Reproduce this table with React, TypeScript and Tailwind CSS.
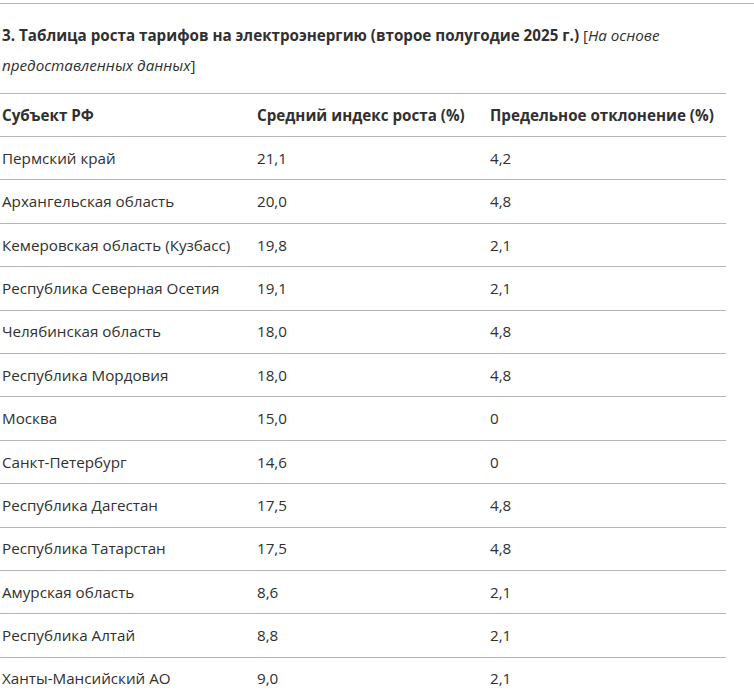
import React from "react";

const rows: [string, string, string][] = [
  ["Пермский край", "21,1", "4,2"],
  ["Архангельская область", "20,0", "4,8"],
  ["Кемеровская область (Кузбасс)", "19,8", "2,1"],
  ["Республика Северная Осетия", "19,1", "2,1"],
  ["Челябинская область", "18,0", "4,8"],
  ["Республика Мордовия", "18,0", "4,8"],
  ["Москва", "15,0", "0"],
  ["Санкт-Петербург", "14,6", "0"],
  ["Республика Дагестан", "17,5", "4,8"],
  ["Республика Татарстан", "17,5", "4,8"],
  ["Амурская область", "8,6", "2,1"],
  ["Республика Алтай", "8,8", "2,1"],
  ["Ханты-Мансийский АО", "9,0", "2,1"],
];

export default function App() {
  return (
    <div
      className="w-[754px] h-[699px] overflow-hidden bg-white text-[#303030]"
      style={{ fontFamily: '"Open Sans", "Noto Sans", sans-serif' }}
    >
      <div className="pt-[3px]">
        <div className="h-px bg-[#b8b8b8]" />
      </div>
      <p className="text-[15.2px] leading-[30px] pt-[16px] pl-[2px] pr-[40px]">
        <span className="font-bold">
          3. Таблица роста тарифов на электроэнергию (второе полугодие 2025 г.)
        </span>{" "}
        [<em>На основе предоставленных данных</em>]
      </p>
      <table className="mt-[13px] w-[726px] border-collapse text-[15.2px] border-t border-[#b5b5b5] table-fixed">
        <colgroup>
          <col className="w-[255px]" />
          <col className="w-[233px]" />
          <col />
        </colgroup>
        <thead>
          <tr className="h-[43px] border-b border-[#b5b5b5]">
            <th className="text-left font-bold pl-[2px]">Субъект РФ</th>
            <th className="text-left font-bold pl-[2px]">Средний индекс роста (%)</th>
            <th className="text-left font-bold pl-[2px]">Предельное отклонение (%)</th>
          </tr>
        </thead>
        <tbody>
          {rows.map((r) => (
            <tr key={r[0]} className="h-[43.4px] border-b border-[#b5b5b5]">
              <td className="pl-[2px]">{r[0]}</td>
              <td className="pl-[2px]">{r[1]}</td>
              <td className="pl-[2px]">{r[2]}</td>
            </tr>
          ))}
        </tbody>
      </table>
    </div>
  );
}
